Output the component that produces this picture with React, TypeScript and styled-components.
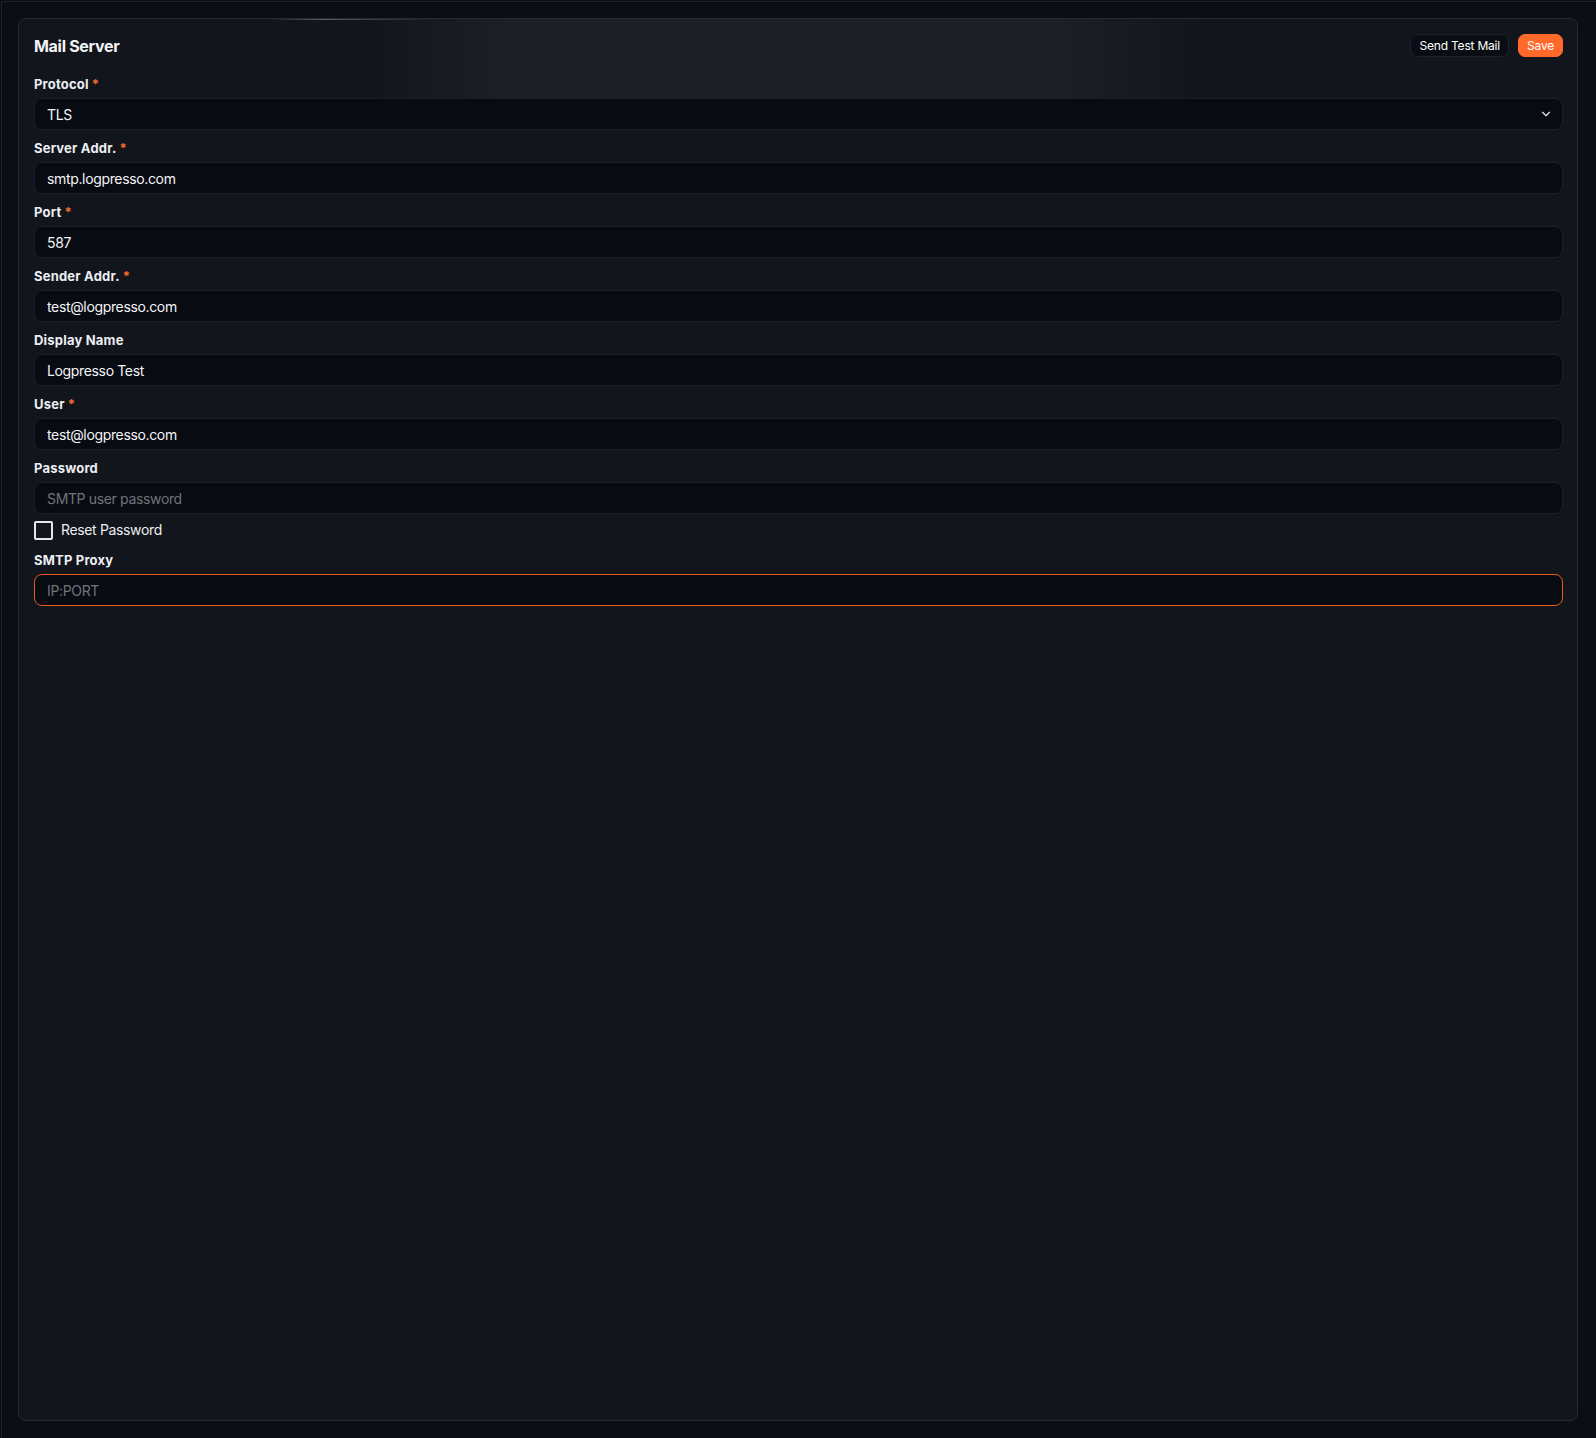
import React from "react";
import styled, { createGlobalStyle } from "styled-components";
import { ChevronDown } from "lucide-react";

const GlobalStyle = createGlobalStyle`
  html, body {
    margin: 0;
    padding: 0;
    background: #0b0e15;
  }
  body {
    font-family: Inter, "Noto Sans", "Liberation Sans", sans-serif;
    color: #f1f3f6;
    -webkit-font-smoothing: antialiased;
  }
  * { box-sizing: border-box; }
`;

const Page = styled.div`
  height: 1438px;
  padding: 1px 0 0 1px;
  background: #0b0e15;
`;

const Frame = styled.div`
  height: 1437px;
  border-top: 1px solid #1c2030;
  border-left: 1px solid #1c2030;
  padding: 16px 18px 17px 16px;
  display: flex;
`;

const Card = styled.section`
  position: relative;
  flex: 1;
  background: #12151c;
  border: 1px solid #252a38;
  border-radius: 8px;
  padding: 15px 14px 15px 15px;
  overflow: hidden;

  &::before {
    content: "";
    position: absolute;
    top: 0;
    left: 22%;
    width: 54%;
    height: 80px;
    pointer-events: none;
    background:
      linear-gradient(90deg, rgba(40, 52, 72, 0) 0%, rgba(40, 52, 72, 0.55) 20%, rgba(40, 52, 72, 0.55) 80%, rgba(40, 52, 72, 0) 100%) bottom / 100% 1px no-repeat,
      linear-gradient(90deg, rgba(255, 255, 255, 0) 0%, rgba(255, 255, 255, 0.045) 18%, rgba(255, 255, 255, 0.045) 82%, rgba(255, 255, 255, 0) 100%);
  }

  &::after {
    content: "";
    position: absolute;
    top: 0;
    left: 0;
    right: 0;
    height: 1px;
    pointer-events: none;
    background: linear-gradient(90deg, rgba(255, 255, 255, 0) 16%, rgba(255, 255, 255, 0.3) 19.5%, rgba(255, 255, 255, 0) 27%);
  }
`;

const Header = styled.header`
  position: relative;
  z-index: 1;
  display: flex;
  align-items: center;
  justify-content: space-between;
  height: 23px;
  margin-bottom: 17px;
`;

const Title = styled.h2`
  margin: 0;
  font-size: 16px;
  font-weight: 700;
  color: #f3f4f6;
  letter-spacing: -0.3px;
`;

const Actions = styled.div`
  display: flex;
  align-items: center;
  gap: 9px;
`;

const Button = styled.button<{ $primary?: boolean }>`
  height: 23px;
  padding: 0 8px;
  border-radius: 7px;
  font-family: inherit;
  font-size: 12px;
  font-weight: 400;
  letter-spacing: -0.2px;
  line-height: 1;
  cursor: pointer;
  color: #ffffff;
  background: ${(p) => (p.$primary ? "#ff6a2b" : "#0a0d14")};
  border: 1px solid ${(p) => (p.$primary ? "#ff6a2b" : "#1c2130")};
`;

const Form = styled.div`
  position: relative;
  z-index: 1;
  display: flex;
  flex-direction: column;
  gap: 8px;
`;

const Field = styled.div`
  display: flex;
  flex-direction: column;
  gap: 4px;
`;

const Label = styled.label`
  font-size: 13px;
  font-weight: 700;
  line-height: 20px;
  letter-spacing: 0.2px;
  color: #eceef2;
`;

const Required = styled.span`
  color: #f26a2e;
  margin-left: 3px;
`;

const Input = styled.input<{ $focused?: boolean }>`
  width: 100%;
  height: 32px;
  padding: 0 12px;
  background: #080b12;
  border: 1px solid ${(p) => (p.$focused ? "#ea5a1c" : "#1b2030")};
  border-radius: 8px;
  font-family: inherit;
  font-size: 14px;
  letter-spacing: -0.35px;
  color: #f3f4f6;
  outline: none;

  &::placeholder {
    color: #70747c;
  }
`;

const SelectWrap = styled.div`
  position: relative;
`;

const Select = styled.select`
  width: 100%;
  height: 32px;
  padding: 0 12px;
  background: #080b12;
  border: 1px solid #1b2030;
  border-radius: 8px;
  font-family: inherit;
  font-size: 14px;
  letter-spacing: -0.35px;
  color: #f3f4f6;
  outline: none;
  appearance: none;
  -webkit-appearance: none;
`;

const SelectIcon = styled.span`
  position: absolute;
  right: 10px;
  top: 50%;
  transform: translateY(-50%);
  display: flex;
  color: #e5e7eb;
  pointer-events: none;
`;

const CheckRow = styled.label`
  display: flex;
  align-items: center;
  gap: 8px;
  margin: 2px 0 2px;
  font-size: 14px;
  line-height: 20px;
  letter-spacing: -0.35px;
  color: #eceef2;
  cursor: pointer;
`;

const CheckBox = styled.span`
  width: 19px;
  height: 19px;
  border: 2px solid #e5e7eb;
  border-radius: 2px;
  flex-shrink: 0;
`;

type FieldDef = {
  label: string;
  required?: boolean;
  value?: string;
  placeholder?: string;
};

const fields: FieldDef[] = [
  { label: "Server Addr.", required: true, value: "smtp.logpresso.com" },
  { label: "Port", required: true, value: "587" },
  { label: "Sender Addr.", required: true, value: "test@logpresso.com" },
  { label: "Display Name", value: "Logpresso Test" },
  { label: "User", required: true, value: "test@logpresso.com" },
];

export default function App() {
  return (
    <>
      <GlobalStyle />
      <Page>
        <Frame>
          <Card>
            <Header>
              <Title>Mail Server</Title>
              <Actions>
                <Button>Send Test Mail</Button>
                <Button $primary>Save</Button>
              </Actions>
            </Header>
            <Form>
              <Field>
                <Label>
                  Protocol<Required>*</Required>
                </Label>
                <SelectWrap>
                  <Select defaultValue="TLS">
                    <option value="TLS">TLS</option>
                    <option value="SSL">SSL</option>
                    <option value="None">None</option>
                  </Select>
                  <SelectIcon>
                    <ChevronDown size={14} strokeWidth={2} />
                  </SelectIcon>
                </SelectWrap>
              </Field>
              {fields.map((f) => (
                <Field key={f.label}>
                  <Label>
                    {f.label}
                    {f.required && <Required>*</Required>}
                  </Label>
                  <Input defaultValue={f.value} placeholder={f.placeholder} />
                </Field>
              ))}
              <Field>
                <Label>Password</Label>
                <Input type="password" placeholder="SMTP user password" />
                <CheckRow>
                  <CheckBox />
                  Reset Password
                </CheckRow>
              </Field>
              <Field>
                <Label>SMTP Proxy</Label>
                <Input $focused placeholder="IP:PORT" />
              </Field>
            </Form>
          </Card>
        </Frame>
      </Page>
    </>
  );
}
